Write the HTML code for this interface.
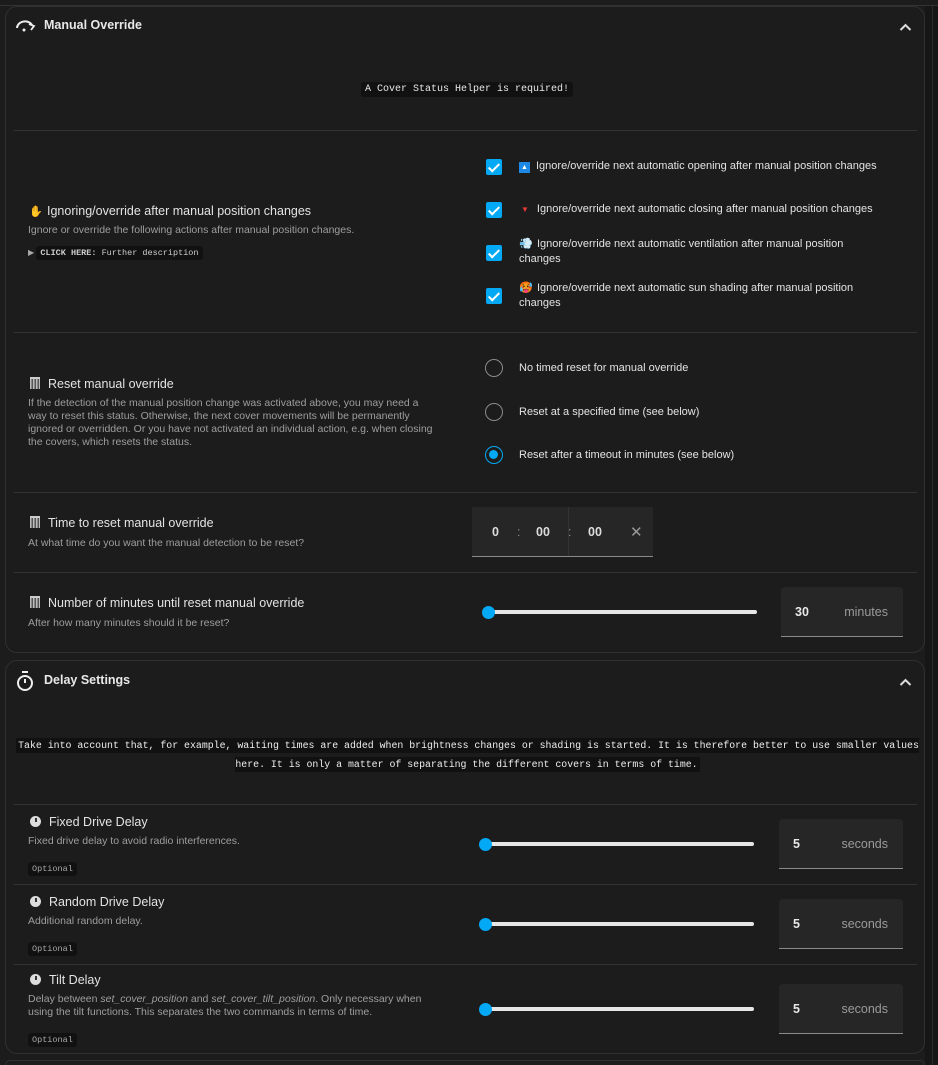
<!DOCTYPE html>
<html><head><meta charset="utf-8"><style>
*{box-sizing:border-box;margin:0;padding:0}
html,body{width:938px;height:1065px;overflow:hidden}
body{background:#1c1c1c;font-family:"Liberation Sans",sans-serif;color:#e1e1e1;position:relative}
.a{position:absolute}
.card{position:absolute;left:5px;width:920px;border:1px solid #303030;border-radius:12px;background:#1c1c1c}
.hr{position:absolute;left:14px;width:903px;height:1px;background:#333}
.h{font-size:12.5px;font-weight:bold;color:#e8e8e8}
.t{font-size:12.5px;color:#e3e3e3;white-space:nowrap}
.d{font-size:10.5px;color:#9e9e9e;line-height:13px}
.code{font-family:"Liberation Mono",monospace;font-size:10px;background:#111;color:#e8e8e8;padding:2px 4px;border-radius:3px}
.opt{font-family:"Liberation Mono",monospace;font-size:8.5px;background:#111;color:#aaa;padding:2px 4px;border-radius:3px}
.cb{position:absolute;width:16px;height:16px;background:#03a9f4;border-radius:2px}
.cb:after{content:"";position:absolute;left:5px;top:1.5px;width:4px;height:9px;border:solid #fff;border-width:0 2px 2px 0;transform:rotate(45deg)}
.ct{font-size:11px;color:#e3e3e3;line-height:15px;white-space:nowrap}
.rd{position:absolute;width:18px;height:18px;border:1.5px solid #8a8a8a;border-radius:50%}
.rd.on{border-color:#03a9f4}
.rd.on:after{content:"";position:absolute;left:3px;top:3px;width:9px;height:9px;border-radius:50%;background:#03a9f4}
.sl{position:absolute;height:4px;background:#e6e6e6;border-radius:2px}
.th{position:absolute;width:13px;height:13px;border-radius:50%;background:#03a9f4}
.inp{position:absolute;background:#262626;border-bottom:1px solid #8a8a8a;border-radius:4px 4px 0 0}
.inp .v{position:absolute;left:14px;top:18px;font-size:12.5px;font-weight:bold;color:#e8e8e8}
.inp .u{position:absolute;right:15px;top:18px;font-size:12.5px;color:#9a9a9a}
.em{display:inline-block;width:12px;text-align:center;margin-right:6px;font-size:11px}
.clock{display:inline-block;width:11px;height:11px;border-radius:50%;background:#ddd;position:relative;margin-right:8px;vertical-align:-1px}
.clock:after{content:"";position:absolute;left:4.5px;top:2px;width:2px;height:4px;background:#333}
.bin{display:inline-block;width:10px;height:12px;margin-right:8px;vertical-align:-1px;background:repeating-linear-gradient(90deg,#bbb 0 1.5px,#555 1.5px 3px);border-top:2px solid #ccc}
</style></head><body>
<div class="a" style="left:0;top:5px;width:938px;height:1px;background:#333"></div>
<div class="a" style="left:925px;top:6px;width:13px;height:1059px;background:#161616"></div>
<div class="a" style="left:932px;top:6px;width:1px;height:1059px;background:#2a2a2a"></div>

<div class="card" style="top:6px;height:647px"></div>
<svg class="a" style="left:15px;top:18px" width="22" height="16" viewBox="0 0 22 16"><path d="M2 10 A8 7 0 0 1 17 7" fill="none" stroke="#eee" stroke-width="2"/><path d="M14 6 L19 8 L16 12" fill="none" stroke="#eee" stroke-width="1.8"/><circle cx="9" cy="12" r="1.5" fill="#eee"/></svg>
<div class="a h" style="left:44px;top:18px">Manual Override</div>
<svg class="a" style="left:899px;top:22px" width="13" height="10"><path d="M1.5 8 L6.5 3 L11.5 8" fill="none" stroke="#ddd" stroke-width="2"/></svg>
<div class="a code" style="left:361px;top:82px">A Cover Status Helper is required!</div>
<div class="hr" style="top:130px"></div>

<div class="a t" style="left:29px;top:204px"><span class="em">✋</span>Ignoring/override after manual position changes</div>
<div class="a d" style="left:28px;top:224px">Ignore or override the following actions after manual position changes.</div>
<div class="a" style="left:28px;top:248px;font-size:8px;color:#aaa">▶ <span class="opt" style="color:#ccc;font-size:8.5px"><b>CLICK HERE:</b> Further description</span></div>

<div class="cb" style="left:486px;top:159px"></div>
<div class="cb" style="left:486px;top:202px"></div>
<div class="cb" style="left:486px;top:245px"></div>
<div class="cb" style="left:486px;top:288px"></div>
<div class="a ct" style="left:519px;top:159px"><span style="display:inline-block;width:11px;height:11px;background:#1e88e5;color:#fff;font-size:7px;text-align:center;line-height:11px;margin-right:6px">▲</span>Ignore/override next automatic opening after manual position changes</div>
<div class="a ct" style="left:519px;top:202px"><span style="color:#e53935;font-size:8px;margin:0 8px 0 2px">▼</span>Ignore/override next automatic closing after manual position changes</div>
<div class="a ct" style="left:519px;top:237px"><span class="em">💨</span>Ignore/override next automatic ventilation after manual position<br>changes</div>
<div class="a ct" style="left:519px;top:281px"><span class="em">🥵</span>Ignore/override next automatic sun shading after manual position<br>changes</div>
<div class="hr" style="top:332px"></div>

<div class="a t" style="left:30px;top:377px"><span class="bin"></span>Reset manual override</div>
<div class="a d" style="left:28px;top:397px;white-space:nowrap">If the detection of the manual position change was activated above, you may need a<br>way to reset this status. Otherwise, the next cover movements will be permanently<br>ignored or overridden. Or you have not activated an individual action, e.g. when closing<br>the covers, which resets the status.</div>
<div class="rd" style="left:485px;top:359px"></div>
<div class="rd" style="left:485px;top:403px"></div>
<div class="rd on" style="left:485px;top:446px"></div>
<div class="a ct" style="left:519px;top:361px">No timed reset for manual override</div>
<div class="a ct" style="left:519px;top:405px">Reset at a specified time (see below)</div>
<div class="a ct" style="left:519px;top:448px">Reset after a timeout in minutes (see below)</div>
<div class="hr" style="top:492px"></div>

<div class="a t" style="left:30px;top:516px"><span class="bin"></span>Time to reset manual override</div>
<div class="a d" style="left:28px;top:537px">At what time do you want the manual detection to be reset?</div>
<div class="inp" style="left:472px;top:507px;width:181px;height:50px;border-radius:0"></div>
<div class="a" style="left:568px;top:507px;width:1px;height:49px;background:#333"></div>
<div class="a" style="left:472px;top:525px;width:181px;font-size:12.5px;color:#ddd">
<span class="a" style="left:20px;font-weight:bold">0</span><span class="a" style="left:45px;color:#888">:</span><span class="a" style="left:64px;font-weight:bold">00</span><span class="a" style="left:96px;color:#888">:</span><span class="a" style="left:116px;font-weight:bold">00</span><span class="a" style="left:158px;color:#999;font-size:15px;top:-2px">✕</span></div>
<div class="hr" style="top:572px"></div>

<div class="a t" style="left:30px;top:596px"><span class="bin"></span>Number of minutes until reset manual override</div>
<div class="a d" style="left:28px;top:617px">After how many minutes should it be reset?</div>
<div class="sl" style="left:484px;top:610px;width:273px"></div>
<div class="th" style="left:482px;top:606px"></div>
<div class="inp" style="left:781px;top:587px;width:122px;height:50px"><span class="v">30</span><span class="u">minutes</span></div>

<div class="card" style="top:660px;height:394px"></div>
<svg class="a" style="left:16px;top:670px" width="18" height="22" viewBox="0 0 18 22"><rect x="6" y="1" width="6" height="2" fill="#eee"/><circle cx="9" cy="13" r="7" fill="none" stroke="#eee" stroke-width="2"/><path d="M9 13 V9" stroke="#eee" stroke-width="2"/></svg>
<div class="a h" style="left:44px;top:673px">Delay Settings</div>
<svg class="a" style="left:899px;top:677px" width="13" height="10"><path d="M1.5 8 L6.5 3 L11.5 8" fill="none" stroke="#ddd" stroke-width="2"/></svg>
<div class="a" style="left:12px;top:736px;width:911px;text-align:center;font-family:'Liberation Mono',monospace;font-size:9.9px;line-height:19px;color:#eee"><span style="background:#111;padding:2px 2px">Take into account that, for example, waiting times are added when brightness changes or shading is started. It is therefore better to use smaller values here. It is only a matter of separating the different covers in terms of time.</span></div>
<div class="hr" style="top:804px"></div>

<div class="a t" style="left:30px;top:815px"><span class="clock"></span>Fixed Drive Delay</div>
<div class="a d" style="left:28px;top:835px">Fixed drive delay to avoid radio interferences.</div>
<div class="a opt" style="left:28px;top:862px">Optional</div>
<div class="sl" style="left:482px;top:842px;width:272px"></div><div class="th" style="left:479px;top:838px"></div>
<div class="inp" style="left:779px;top:819px;width:124px;height:50px"><span class="v">5</span><span class="u">seconds</span></div>
<div class="hr" style="top:884px"></div>

<div class="a t" style="left:30px;top:895px"><span class="clock"></span>Random Drive Delay</div>
<div class="a d" style="left:28px;top:915px">Additional random delay.</div>
<div class="a opt" style="left:28px;top:942px">Optional</div>
<div class="sl" style="left:482px;top:922px;width:272px"></div><div class="th" style="left:479px;top:918px"></div>
<div class="inp" style="left:779px;top:899px;width:124px;height:50px"><span class="v">5</span><span class="u">seconds</span></div>
<div class="hr" style="top:964px"></div>

<div class="a t" style="left:30px;top:973px"><span class="clock"></span>Tilt Delay</div>
<div class="a d" style="left:28px;top:993px;width:420px">Delay between <i>set_cover_position</i> and <i>set_cover_tilt_position</i>. Only necessary when using the tilt functions. This separates the two commands in terms of time.</div>
<div class="a opt" style="left:28px;top:1033px">Optional</div>
<div class="sl" style="left:482px;top:1007px;width:272px"></div><div class="th" style="left:479px;top:1003px"></div>
<div class="inp" style="left:779px;top:984px;width:124px;height:50px"><span class="v">5</span><span class="u">seconds</span></div>

<div class="card" style="top:1060px;height:5px;border-bottom:none;border-radius:12px 12px 0 0"></div>
</body></html>
